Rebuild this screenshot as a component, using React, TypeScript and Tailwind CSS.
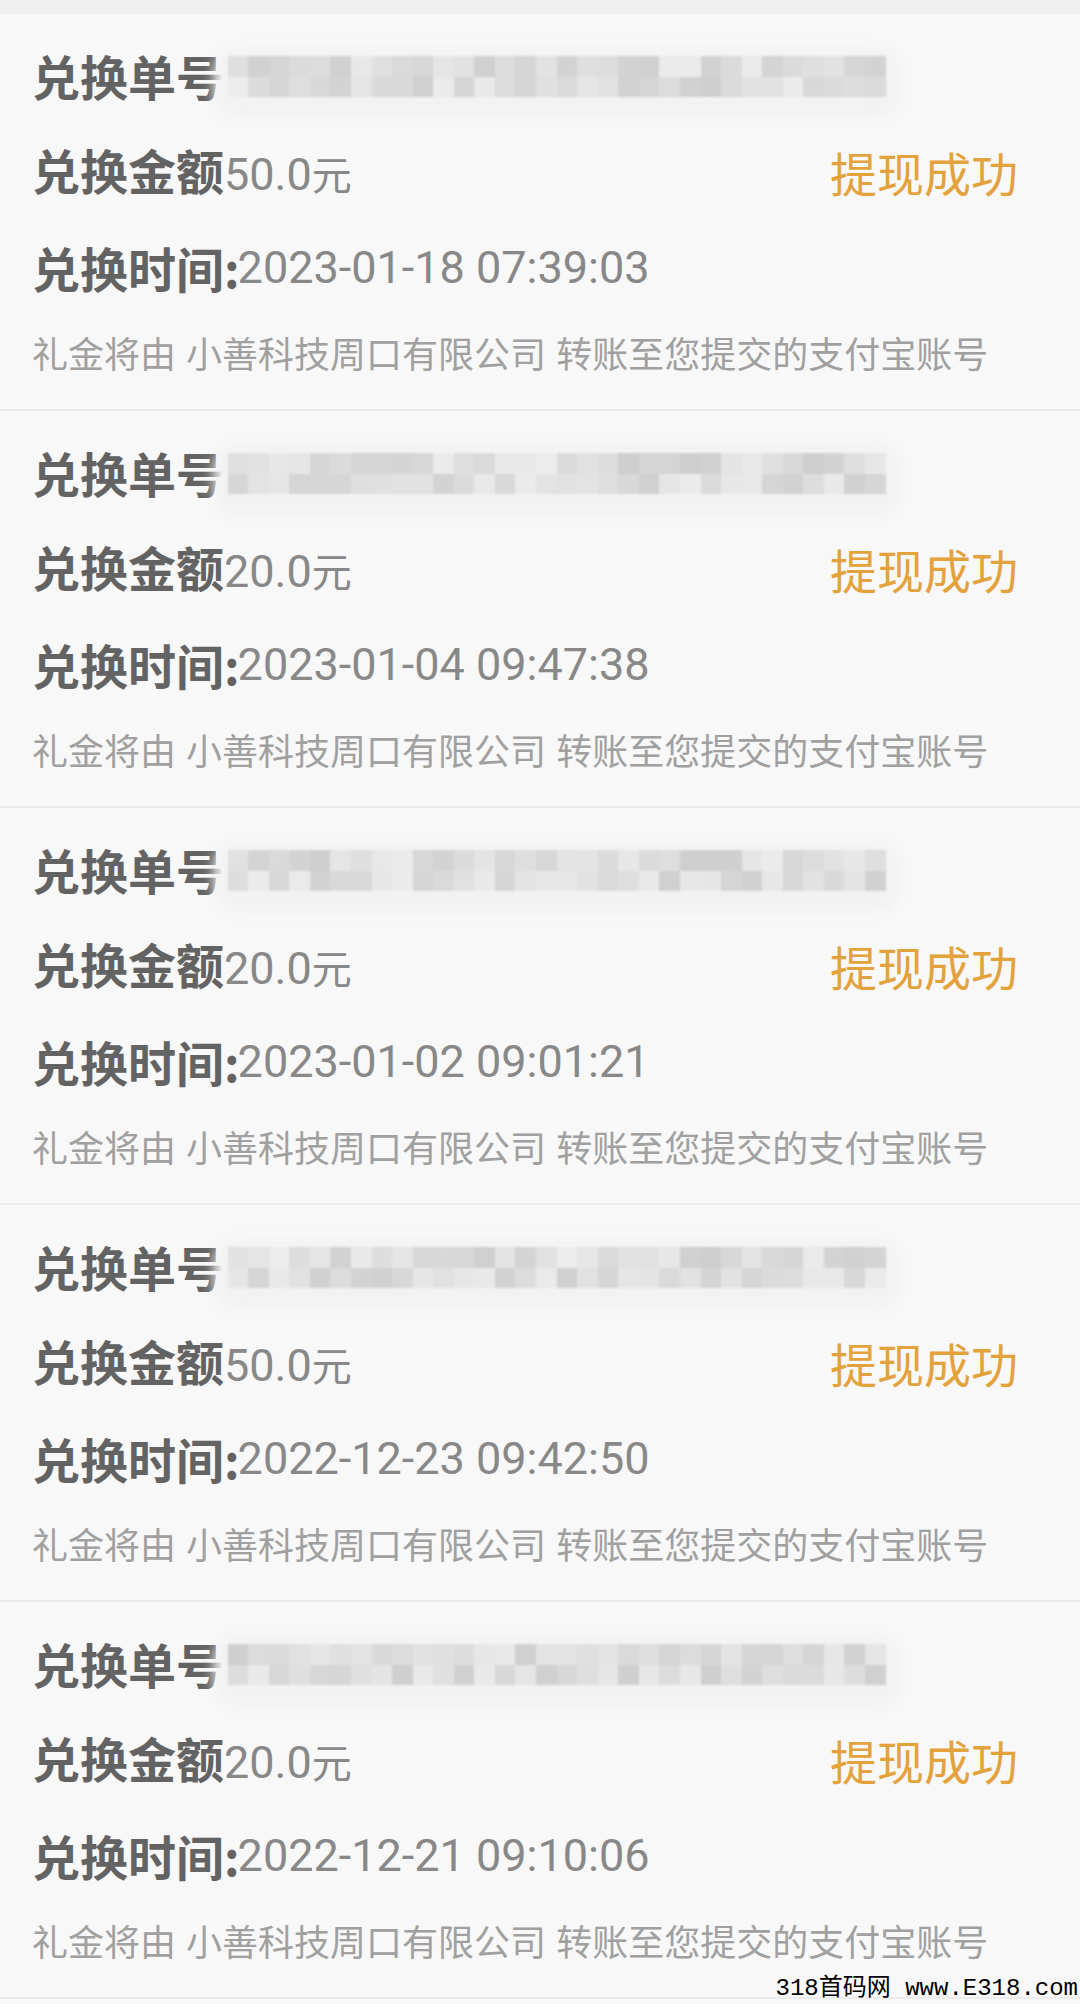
import React from "react";

type Rec = { amount: string; time: string; seed: number };

const records: Rec[] = [
  { amount: "50.0", time: "2023-01-18 07:39:03", seed: 7 },
  { amount: "20.0", time: "2023-01-04 09:47:38", seed: 19 },
  { amount: "20.0", time: "2023-01-02 09:01:21", seed: 31 },
  { amount: "50.0", time: "2022-12-23 09:42:50", seed: 43 },
  { amount: "20.0", time: "2022-12-21 09:10:06", seed: 59 },
];

function shades(seed: number, n: number): string[] {
  let s = seed * 9301 + 49297;
  const out: string[] = [];
  for (let i = 0; i < n; i++) {
    s = (s * 9301 + 49297) % 233280;
    const v = Math.round(206 + (s / 233280) * 30);
    out.push(`rgb(${v},${v},${v})`);
  }
  return out;
}

function Mosaic({ seed }: { seed: number }) {
  const cells = shades(seed, 64);
  return (
    <div className="relative -ml-[12px] mt-[3px] h-[41px] w-[658px]">
      <div className="absolute -inset-x-[14px] -top-[8px] -bottom-[22px] rounded-[24px] bg-[#f2f2f2] blur-[6px]" />
      <div className="relative grid h-full w-full grid-cols-[repeat(32,1fr)] grid-rows-2 blur-[1px]">
        {cells.map((c, i) => (
          <div key={i} style={{ backgroundColor: c }} />
        ))}
      </div>
    </div>
  );
}

const labelCls =
  "font-['Noto_Sans_CJK_SC',sans-serif] font-bold text-[48px] leading-none text-[#636363]";
const valueCls =
  "font-['Roboto','Noto_Sans_CJK_SC',sans-serif] text-[45px] leading-none text-[#888888]";

function Card({ r }: { r: Rec }) {
  return (
    <div className="flex h-[397px] flex-col border-b-2 border-[#ececec] pt-[13px] pl-[32px] pr-[62px]">
      <div className="flex h-[96px] items-center">
        <span className={labelCls}>兑换单号:</span>
        <Mosaic seed={r.seed} />
      </div>
      <div className="flex h-[96px] items-center justify-between">
        <div className="flex items-baseline">
          <span className={labelCls}>兑换金额</span>
          <span className={valueCls}>{r.amount}</span>
          <span className="font-['Noto_Sans_CJK_SC',sans-serif] text-[40px] leading-none text-[#888888]">
            元
          </span>
        </div>
        <span className="font-['Noto_Sans_CJK_SC',sans-serif] text-[47px] leading-none text-[#e3a23c]">
          提现成功
        </span>
      </div>
      <div className="flex h-[96px] items-center">
        <span className={labelCls}>兑换时间:</span>
        <span className={`${valueCls} -ml-[2px]`}>{r.time}</span>
      </div>
      <div className="flex h-[74px] items-center">
        <span className="font-['Noto_Sans_CJK_SC',sans-serif] text-[36px] leading-none text-[#a0a0a0] [word-spacing:2px] whitespace-nowrap">
          礼金将由 小善科技周口有限公司 转账至您提交的支付宝账号
        </span>
      </div>
    </div>
  );
}

export default function App() {
  return (
    <div className="relative h-[2004px] w-[1080px] overflow-hidden bg-[#f8f8f8]">
      <div className="h-[14px] bg-[#efefef]" />
      {records.map((r, i) => (
        <Card key={i} r={r} />
      ))}
      <div className="absolute bottom-[3px] right-[2px] font-['Liberation_Mono','Noto_Sans_CJK_SC',monospace] text-[24px] leading-none text-black whitespace-nowrap">
        318首码网 www.E318.com
      </div>
    </div>
  );
}
